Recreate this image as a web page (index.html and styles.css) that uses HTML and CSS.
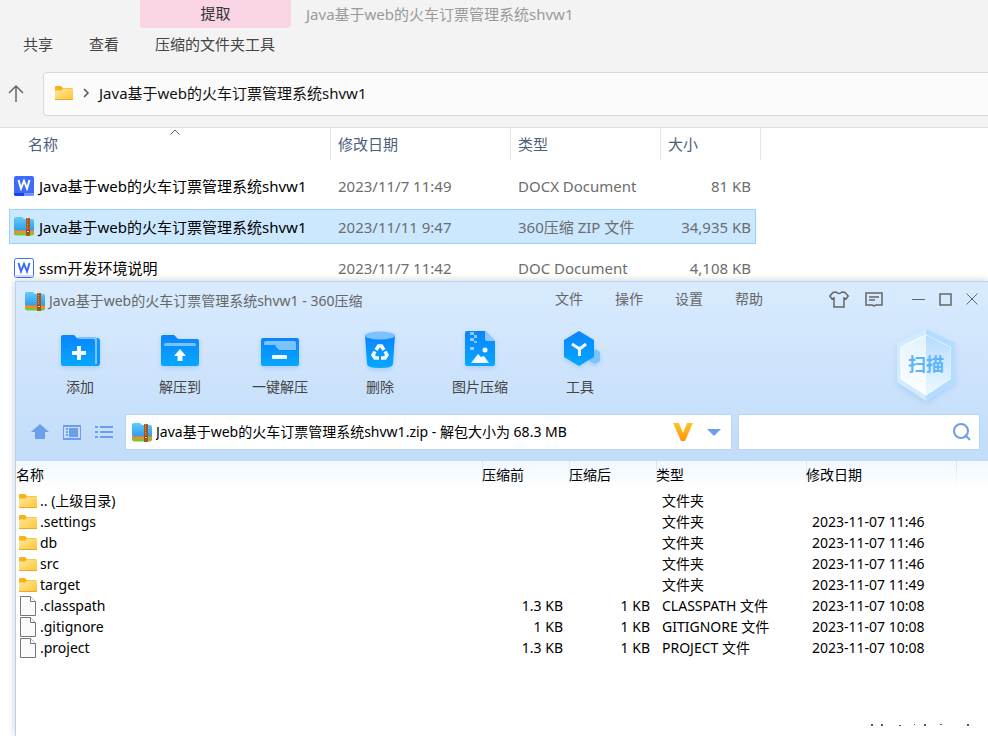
FILE: index.html
```html
<!DOCTYPE html>
<html lang="zh-CN">
<head>
    <meta charset="UTF-8">
    <meta name="viewport" content="width=device-width, initial-scale=1.0">
    <title>Java基于web的火车订票管理系统shvw1</title>
    <link rel="stylesheet" href="styles.css">
</head>
<body>
    <!-- shared icons -->
    <svg class="sprite" aria-hidden="true">
        <defs>
            <linearGradient id="g-folder" x1="0" y1="0" x2="1" y2="1">
                <stop offset="0" stop-color="#ffe9a2"/>
                <stop offset="1" stop-color="#fdc52f"/>
            </linearGradient>
            <linearGradient id="g-blue" x1="0" y1="0" x2="0" y2="1">
                <stop offset="0" stop-color="#0a84ff"/>
                <stop offset="1" stop-color="#05a8ff"/>
            </linearGradient>
            <linearGradient id="g-zip" x1="0" y1="0" x2="0" y2="1">
                <stop offset="0" stop-color="#62ccf8"/>
                <stop offset="1" stop-color="#2e9cf0"/>
            </linearGradient>
            <linearGradient id="g-gold" x1="0" y1="0" x2="0" y2="1">
                <stop offset="0" stop-color="#ffc62e"/>
                <stop offset="1" stop-color="#ff9300"/>
            </linearGradient>
            <linearGradient id="g-scan-l" x1="0" y1="0" x2="0" y2="1">
                <stop offset="0" stop-color="#e3f2ff"/>
                <stop offset="1" stop-color="#ffffff"/>
            </linearGradient>
            <linearGradient id="g-scan-r" x1="0" y1="0" x2="0" y2="1">
                <stop offset="0" stop-color="#b4dcff"/>
                <stop offset="1" stop-color="#eef8ff"/>
            </linearGradient>
        </defs>
        <symbol id="folder" viewBox="0 0 18 14">
            <path d="M0 1a1 1 0 0 1 1-1h5l2 2h9v3H0z" fill="#f8b31c"/>
            <path d="M0 4.500h6.500l1.500-2h10V14H0z" fill="url(#g-folder)"/>
            <path d="M0 13h18v1H0z" fill="#e9a92c"/>
        </symbol>
        <symbol id="zip" viewBox="0 0 20 19">
            <path d="M0 12h20v4.500a2 2 0 0 1-2 2H2a2 2 0 0 1-2-2z" fill="#76c63c"/>
            <path d="M0 12h20v4H1.500Q0 16 0 14z" fill="#fb8a1e"/>
            <path d="M0 2q0-2 2-2h6l2 2h8q2 0 2 2v9.500H2q-2 0-2-2z" fill="url(#g-zip)"/>
            <path d="M12 1h4v18h-4z" fill="#a9561c"/>
            <path d="M13.500 1v11" stroke="#d98d50" stroke-dasharray="1 1"/>
            <path d="M12.500 13.500h3v2h-3z" fill="#f6dcae" stroke="#8f4718"/>
        </symbol>
        <symbol id="file" viewBox="0 0 16 20">
            <path d="M.5.5h10l5 5v14H.5z" fill="#fafafa" stroke="#777"/>
            <path d="M10.500.5v5h5" fill="#fff" stroke="#777"/>
        </symbol>
    </svg>

    <div class="explorer">
        <header class="ribbon">
            <div class="ribbon-top">
                <button class="tab-extract">提取</button>
                <h1 class="explorer-title">Java基于web的火车订票管理系统shvw1</h1>
            </div>
            <nav class="ribbon-tabs">
                <button>共享</button>
                <button>查看</button>
                <button>压缩的文件夹工具</button>
            </nav>
            <div class="address-row">
                <button class="up-button" aria-label="向上">
                    <svg width="16" height="18" viewBox="0 0 16 18" fill="none" stroke="#666" stroke-width="1.500"><path d="M8 17V1M1 8l7-7 7 7"/></svg>
                </button>
                <div class="address">
                    <svg width="18" height="14"><use href="#folder"/></svg>
                    <svg width="6" height="10" viewBox="0 0 6 10" fill="none" stroke="#555" stroke-width="1.500"><path d="M1 1l4 4-4 4"/></svg>
                    <a href="#">Java基于web的火车订票管理系统shvw1</a>
                </div>
            </div>
        </header>

        <table class="files">
            <colgroup>
                <col class="c-name"><col class="c-date"><col class="c-type"><col class="c-size"><col class="c-end">
            </colgroup>
            <thead>
                <tr>
                    <th>名称
                        <svg class="sort" width="10" height="6" viewBox="0 0 10 6" fill="none" stroke="#666"><path d="M.5 5.500L5 1l4.500 4.500"/></svg>
                    </th>
                    <th>修改日期</th>
                    <th>类型</th>
                    <th>大小</th>
                    <th></th>
                </tr>
            </thead>
            <tbody>
                <tr>
                    <td>
                        <div class="file-name">
                            <svg width="20" height="20" viewBox="0 0 20 20">
                                <rect width="20" height="20" rx="2" fill="#3e6bf8"/>
                                <path d="M0 17h10v3H2a2 2 0 0 1-2-2z" fill="#1049e8"/>
                                <path d="M10 17h10v1a2 2 0 0 1-2 2h-8z" fill="#6f97ff"/>
                                <path d="M4.500 4l2.500 8.500L10 5l3 7.500L15.500 4" fill="none" stroke="#fff" stroke-width="2"/>
                            </svg>
                            Java基于web的火车订票管理系统shvw1
                        </div>
                    </td>
                    <td>2023/11/7 11:49</td>
                    <td>DOCX Document</td>
                    <td>81 KB</td>
                </tr>
                <tr class="selected">
                    <td>
                        <div class="file-name">
                            <svg width="20" height="19"><use href="#zip"/></svg>
                            Java基于web的火车订票管理系统shvw1
                        </div>
                    </td>
                    <td>2023/11/11 9:47</td>
                    <td>360压缩 ZIP 文件</td>
                    <td>34,935 KB</td>
                </tr>
                <tr>
                    <td>
                        <div class="file-name">
                            <svg width="20" height="20" viewBox="0 0 20 20">
                                <rect x=".5" y=".5" width="19" height="19" rx="2" fill="#fff" stroke="#3e6bf8"/>
                                <path d="M1 17h18v2H1z" fill="#d5e0ff"/>
                                <path d="M4.500 5l2.500 8.500L10 6l3 7.500L15.500 5" fill="none" stroke="#3e6bf8" stroke-width="2"/>
                            </svg>
                            ssm开发环境说明
                        </div>
                    </td>
                    <td>2023/11/7 11:42</td>
                    <td>DOC Document</td>
                    <td>4,108 KB</td>
                </tr>
            </tbody>
        </table>
    </div>

    <div class="zip-window">
        <div class="zip-head">
            <div class="titlebar">
                <svg width="20" height="19"><use href="#zip"/></svg>
                <h2>Java基于web的火车订票管理系统shvw1 - 360压缩</h2>
                <nav class="menu">
                    <button>文件</button>
                    <button>操作</button>
                    <button>设置</button>
                    <button>帮助</button>
                </nav>
                <div class="window-buttons">
                    <button aria-label="皮肤">
                        <svg width="20" height="17" viewBox="0 0 20 17" fill="none" stroke="#666" stroke-width="1.500"><path d="M7 1q3 3 6 0l3 .5L19.200 5 17 8l-2-1v9H5V7L3 8 .8 5 4 1.500z"/></svg>
                    </button>
                    <button aria-label="反馈">
                        <svg width="18" height="15" viewBox="0 0 18 15" fill="none" stroke="#666" stroke-width="1.500"><path d="M1 1h16v12h-6l-2 1-2-1H1zM4 5h10M4 8h6"/></svg>
                    </button>
                    <button aria-label="最小化">
                        <svg width="13" height="13" viewBox="0 0 13 13" stroke="#666"><path d="M0 6.500h13"/></svg>
                    </button>
                    <button aria-label="最大化">
                        <svg width="13" height="13" viewBox="0 0 13 13" fill="none" stroke="#666" stroke-width="1.500"><path d="M1 1h11v11H1z"/></svg>
                    </button>
                    <button aria-label="关闭">
                        <svg width="12" height="12" viewBox="0 0 12 12" stroke="#666"><path d="M.5.5l11 11M11.500.5l-11 11"/></svg>
                    </button>
                </div>
            </div>

            <div class="toolbar">
                <button class="tool">
                    <svg width="40" height="40" viewBox="0 0 40 40">
                        <path d="M18 6h19q3 0 3 3v22q0 3-3 3H18z" fill="#0a95ff"/>
                        <path d="M18 5h16q3 0 3 3v24h-3z" fill="#7cc2ff"/>
                        <path d="M1 5q0-2 2-2h11l4 4h15q2 0 2 2v25H3q-2 0-2-2z" fill="url(#g-blue)"/>
                        <path d="M19 14v14M12 21h14" stroke="#f2faff" stroke-width="4"/>
                    </svg>
                    添加
                </button>
                <button class="tool">
                    <svg width="40" height="40" viewBox="0 0 40 40">
                        <path d="M1 5q0-2 2-2h11l4 4h19q2 0 2 2v23q0 2-2 2H3q-2 0-2-2z" fill="url(#g-blue)"/>
                        <path d="M4 14v-1q0-2 2-2h28q2 0 2 2v1z" fill="#7cc2ff"/>
                        <path d="M20 17l6 7h-3.500v5h-5v-5H14z" fill="#f2faff"/>
                    </svg>
                    解压到
                </button>
                <button class="tool">
                    <svg width="40" height="40" viewBox="0 0 40 40">
                        <rect x="1" y="6" width="38" height="28" rx="2" fill="url(#g-blue)"/>
                        <path d="M4 13v-2q0-2 2-2h28q2 0 2 2v7H20q-2 0-3-2l-2-3z" fill="#7cc2ff"/>
                        <rect x="12" y="23" width="15" height="4" rx="1" fill="#f2faff"/>
                    </svg>
                    一键解压
                </button>
                <button class="tool">
                    <svg width="40" height="40" viewBox="0 0 40 40">
                        <path d="M5 3h30l-2 29q0 4-13 4T7 32z" fill="url(#g-blue)"/>
                        <ellipse cx="20" cy="3.500" rx="15" ry="4" fill="#7cc2ff"/>
                        <g fill="none" stroke="#f2faff" stroke-width="3.500">
                            <path d="M16 18l2.500-4h3l2.500 4"/>
                            <path d="M25 19.500l2 3.500-2 3h-4"/>
                            <path d="M19 26h-4l-2-3 2-3.500"/>
                        </g>
                    </svg>
                    删除
                </button>
                <button class="tool">
                    <svg width="40" height="40" viewBox="0 0 40 40">
                        <path d="M5 1q0-2 2-2h18l10 10v23q0 2-2 2H7q-2 0-2-2z" fill="url(#g-blue)"/>
                        <path d="M25-1l10 10H27q-2 0-2-2z" fill="#8bcaff"/>
                        <path d="M10 0h4v3h-4zM14 3h3v3h-3zM10 6h4v3h-4zM14 9h3v2h-3zM10 15h4v3h-4z" fill="#8bcaff"/>
                        <path d="M11 31l7-9 3 3 3-1 5 7z" fill="#f2faff"/>
                        <circle cx="25" cy="18" r="2.500" fill="#f2faff"/>
                    </svg>
                    图片压缩
                </button>
                <button class="tool">
                    <svg width="40" height="40" viewBox="0 0 40 40">
                        <path d="M35 17l5 3v9l-5 3-6-3z" fill="#7cc2ff"/>
                        <path d="M19-1l15 9v17l-15 9-15-9V8z" fill="url(#g-blue)"/>
                        <path d="M12 12l6 4h3l5-4M19.500 15v9" fill="none" stroke="#f2faff" stroke-width="3"/>
                    </svg>
                    工具
                </button>
                <button class="scan">
                    <svg width="60" height="74" viewBox="0 0 60 74" aria-hidden="true">
                        <path d="M30 1l29 14v39L30 73 1 54V15z" fill="#d3ebff"/>
                        <path d="M30 1l29 14v39L30 73z" fill="#b3ddff"/>
                        <path d="M30 7L54 19v32L30 67 5 51V19z" fill="url(#g-scan-l)" stroke="#fff"/>
                        <path d="M30 7l24 12v32L30 67z" fill="url(#g-scan-r)"/>
                    </svg>
                    <span>扫描</span>
                </button>
            </div>

            <div class="path-row">
                <div class="view-buttons">
                    <button aria-label="上级">
                        <svg width="18" height="16" viewBox="0 0 18 16" fill="#6b9feb"><path d="M9 0l9 8h-4v7H4V8H0z"/></svg>
                    </button>
                    <button aria-label="预览">
                        <svg width="18" height="15" viewBox="0 0 18 15" fill="#6b9feb"><path d="M0 0h18v15H0zM1 2v11h16V2z" fill-rule="evenodd"/><path d="M6 3h9v9H6zM3 3h2v2H3zM3 6h2v2H3zM3 9h2v2H3z"/></svg>
                    </button>
                    <button aria-label="列表">
                        <svg width="18" height="13" viewBox="0 0 18 13" fill="#6b9feb"><path d="M0 0h3v2H0zM5 0h13v2H5zM0 5h3v2H0zM5 5h13v2H5zM0 10h3v2H0zM5 10h13v2H5z"/></svg>
                    </button>
                </div>
                <div class="path-box">
                    <svg width="20" height="19"><use href="#zip"/></svg>
                    <input type="text" aria-label="路径" value="Java基于web的火车订票管理系统shvw1.zip - 解包大小为 68.3 MB">
                    <svg width="20" height="18" viewBox="0 0 20 18"><path d="M0 0h6l4 10 4-10h6l-8 18H8z" fill="url(#g-gold)"/></svg>
                    <button aria-label="展开">
                        <svg width="14" height="7" viewBox="0 0 14 7"><path d="M0 0h14L7 7z" fill="#6b9feb"/></svg>
                    </button>
                </div>
                <div class="search-box">
                    <input type="search" aria-label="搜索">
                    <svg width="18" height="18" viewBox="0 0 18 18" fill="none" stroke="#6b9feb" stroke-width="2"><circle cx="8" cy="8" r="7"/><path d="M12 12l5 5"/></svg>
                </div>
            </div>
        </div>

        <table class="entries">
            <colgroup>
                <col class="e-name"><col class="e-size"><col class="e-size"><col class="e-type"><col class="e-date"><col>
            </colgroup>
            <thead>
                <tr>
                    <th>名称</th>
                    <th>压缩前</th>
                    <th>压缩后</th>
                    <th>类型</th>
                    <th>修改日期</th>
                    <th></th>
                </tr>
            </thead>
            <tbody>
                <tr>
                    <td><div class="entry"><svg width="18" height="14"><use href="#folder"/></svg>.. (上级目录)</div></td>
                    <td></td><td></td><td>文件夹</td><td></td>
                </tr>
                <tr>
                    <td><div class="entry"><svg width="18" height="14"><use href="#folder"/></svg>.settings</div></td>
                    <td></td><td></td><td>文件夹</td><td>2023-11-07 11:46</td>
                </tr>
                <tr>
                    <td><div class="entry"><svg width="18" height="14"><use href="#folder"/></svg>db</div></td>
                    <td></td><td></td><td>文件夹</td><td>2023-11-07 11:46</td>
                </tr>
                <tr>
                    <td><div class="entry"><svg width="18" height="14"><use href="#folder"/></svg>src</div></td>
                    <td></td><td></td><td>文件夹</td><td>2023-11-07 11:46</td>
                </tr>
                <tr>
                    <td><div class="entry"><svg width="18" height="14"><use href="#folder"/></svg>target</div></td>
                    <td></td><td></td><td>文件夹</td><td>2023-11-07 11:49</td>
                </tr>
                <tr>
                    <td><div class="entry"><svg width="18" height="20"><use href="#file"/></svg>.classpath</div></td>
                    <td>1.3 KB</td><td>1 KB</td><td>CLASSPATH 文件</td><td>2023-11-07 10:08</td>
                </tr>
                <tr>
                    <td><div class="entry"><svg width="18" height="20"><use href="#file"/></svg>.gitignore</div></td>
                    <td>1 KB</td><td>1 KB</td><td>GITIGNORE 文件</td><td>2023-11-07 10:08</td>
                </tr>
                <tr>
                    <td><div class="entry"><svg width="18" height="20"><use href="#file"/></svg>.project</div></td>
                    <td>1.3 KB</td><td>1 KB</td><td>PROJECT 文件</td><td>2023-11-07 10:08</td>
                </tr>
            </tbody>
        </table>

        <svg class="specks" width="100" height="4" viewBox="0 0 100 4" fill="#555" aria-hidden="true">
            <path d="M1 1h2v2H1zM11 1h2v2h-2zM29 2h2v1h-2zM44 1h1v1h-1zM54 1h2v2h-2zM70 1h2v1h-2zM97 1h2v2h-2z"/>
        </svg>
    </div>
</body>
</html>
```
FILE: styles.css
```css
* {
    margin: 0;
    padding: 0;
    box-sizing: border-box;
}

body {
    position: relative;
    min-height: 100vh;
    overflow: hidden;
    background: #fff;
    color: #000;
    font-family: "Noto Sans", "Noto Sans CJK SC", sans-serif;
    font-size: 15px;
    line-height: 20px;
}

button,
input {
    border: none;
    background: none;
    font: inherit;
    color: inherit;
}

h1,
h2,
th {
    font-size: inherit;
    font-weight: normal;
    text-align: left;
}

svg {
    flex: none;
    overflow: visible;
}

.sprite {
    position: absolute;
    width: 0;
    height: 0;
}

/* explorer */
.ribbon {
    background: #f3f3f3;
    border-bottom: 1px solid #dcdcdc;
    padding-bottom: 11px;
}

.ribbon-top {
    display: flex;
    align-items: center;
    gap: 15px;
    padding-left: 140px;
}

.tab-extract {
    width: 151px;
    height: 28px;
    padding-bottom: 2px;
    border-radius: 0 0 4px 4px;
    background: #f9d4e5;
    color: #333;
}

.explorer-title {
    color: #9a9a9a;
}

.ribbon-tabs {
    display: flex;
    gap: 36px;
    padding: 6px 23px 0;
    height: 44px;
    align-items: flex-start;
    color: #444;
}

.address-row {
    display: flex;
    align-items: center;
    height: 44px;
}

.up-button {
    display: flex;
    width: 43px;
    padding-left: 8px;
}

.address {
    flex: 1;
    display: flex;
    align-items: center;
    gap: 10px;
    height: 44px;
    padding: 0 0 2px 11px;
    border: 1px solid #d9d9d9;
    border-right: none;
    border-radius: 4px 0 0 4px;
    background: #fbfbfb;
}

.address a {
    color: #111;
    text-decoration: none;
}

.files {
    table-layout: fixed;
    width: 752px;
    margin: -6px 0 0 9px;
    border-spacing: 0 6px;
}

.c-name { width: 322px; }
.c-date { width: 180px; }
.c-type { width: 150px; }
.c-size { width: 95px; }
.c-end { width: 5px; }

.files th {
    position: relative;
    height: 34px;
    padding: 0 0 2px 7px;
    color: #4c607a;
    background: linear-gradient(#e5e5e5, #e5e5e5) right top / 1px 32px no-repeat;
}

.files th:first-child {
    padding-left: 19px;
}

.files th:nth-child(4) {
    background: none;
}

.sort {
    position: absolute;
    top: 1px;
    left: 50%;
}

.files td {
    height: 35px;
    padding-left: 7px;
    color: #6d6d6d;
    white-space: nowrap;
}

.files td:first-child {
    padding-left: 5px;
    color: #000;
}

.files td:nth-child(4) {
    padding-right: 5px;
    text-align: right;
}

.file-name {
    display: flex;
    align-items: center;
    gap: 5px;
}

.selected td {
    background: #cce8ff;
    border: solid #99d1ff;
    border-width: 1px 0;
}

.files .selected td:first-child {
    border-left-width: 1px;
    padding-left: 4px;
}

.files .selected td:last-child {
    border-right-width: 1px;
    padding-right: 4px;
}

/* archive window, overlaps the explorer */
.zip-window {
    position: absolute;
    top: 281px;
    left: 15px;
    right: 0;
    bottom: 0;
    border: solid #b5d4f0;
    border-width: 1px 0 0 1px;
    background: #fff;
    box-shadow: 0 0 8px rgba(0, 0, 0, 0.2);
    font-size: 14px;
}

.zip-head {
    background: linear-gradient(#d8ebfe, #cfe4fc 45%, #c1dcf9);
    padding-bottom: 11px;
}

.titlebar {
    display: flex;
    align-items: center;
    height: 38px;
    padding: 0 10px 0 9px;
    color: #666;
}

.titlebar h2 {
    flex: 1;
    padding-left: 4px;
}

.menu {
    display: flex;
    gap: 32px;
    margin-right: 66px;
    padding-bottom: 4px;
}

.window-buttons {
    display: flex;
    align-items: center;
    gap: 14px;
    padding-bottom: 4px;
}

.window-buttons button {
    display: flex;
}

.window-buttons button:first-child {
    margin-right: 2px;
}

.window-buttons button:nth-child(2) {
    margin-right: 15px;
}

.toolbar {
    display: flex;
    padding: 12px 32px 0 14px;
    height: 94px;
}

.tool {
    display: flex;
    flex-direction: column;
    align-items: center;
    gap: 5px;
    width: 100px;
    height: 70px;
    color: #444;
}

.tool svg {
    filter: drop-shadow(0 2px 2px rgba(60, 140, 230, 0.25));
}

.scan {
    position: relative;
    width: 60px;
    height: 74px;
    margin: -4px 0 0 auto;
}

.scan svg {
    filter: drop-shadow(0 3px 3px rgba(60, 140, 230, 0.2));
}

.scan span {
    position: absolute;
    inset: 26px 0 0;
    font-size: 18px;
    font-weight: bold;
    color: #5cb4fb;
}

.path-row {
    display: flex;
    gap: 6px;
    height: 36px;
    padding-right: 8px;
}

.view-buttons {
    display: flex;
    align-items: center;
    gap: 14px;
    width: 103px;
    padding-left: 15px;
}

.view-buttons button {
    display: flex;
}

.path-box,
.search-box {
    display: flex;
    align-items: center;
    background: #fff;
    border: 1px solid #b9d5f3;
}

.path-box {
    flex: 1;
    gap: 14px;
    padding: 0 10px 0 6px;
}

.path-box input {
    flex: 1;
    margin-left: -10px;
}

.path-box button {
    display: flex;
}

.search-box {
    width: 242px;
    padding: 0 8px;
}

.search-box input {
    flex: 1;
    min-width: 0;
}

input:focus {
    outline: none;
}

.entries {
    table-layout: fixed;
    width: 100%;
    border-collapse: collapse;
}

.e-name { width: 466px; }
.e-size { width: 87px; }
.e-type { width: 150px; }
.e-date { width: 150px; }

.entries thead {
    background: linear-gradient(#f1f8ff, #fff);
}

.entries th {
    height: 29px;
    padding-bottom: 2px;
    background: linear-gradient(#cfe5fb, #fff) left top / 1px 100% no-repeat;
}

.entries th:first-child {
    background: none;
}

.entries td {
    height: 21px;
    line-height: 21px;
    padding-left: 6px;
    white-space: nowrap;
}

.entries td:first-child {
    padding-left: 3px;
}

.entries td:nth-child(2),
.entries td:nth-child(3) {
    padding-right: 6px;
    text-align: right;
}

.entry {
    display: flex;
    align-items: center;
    gap: 3px;
    height: 21px;
}

.specks {
    position: absolute;
    right: 18px;
    bottom: 9px;
}
```
